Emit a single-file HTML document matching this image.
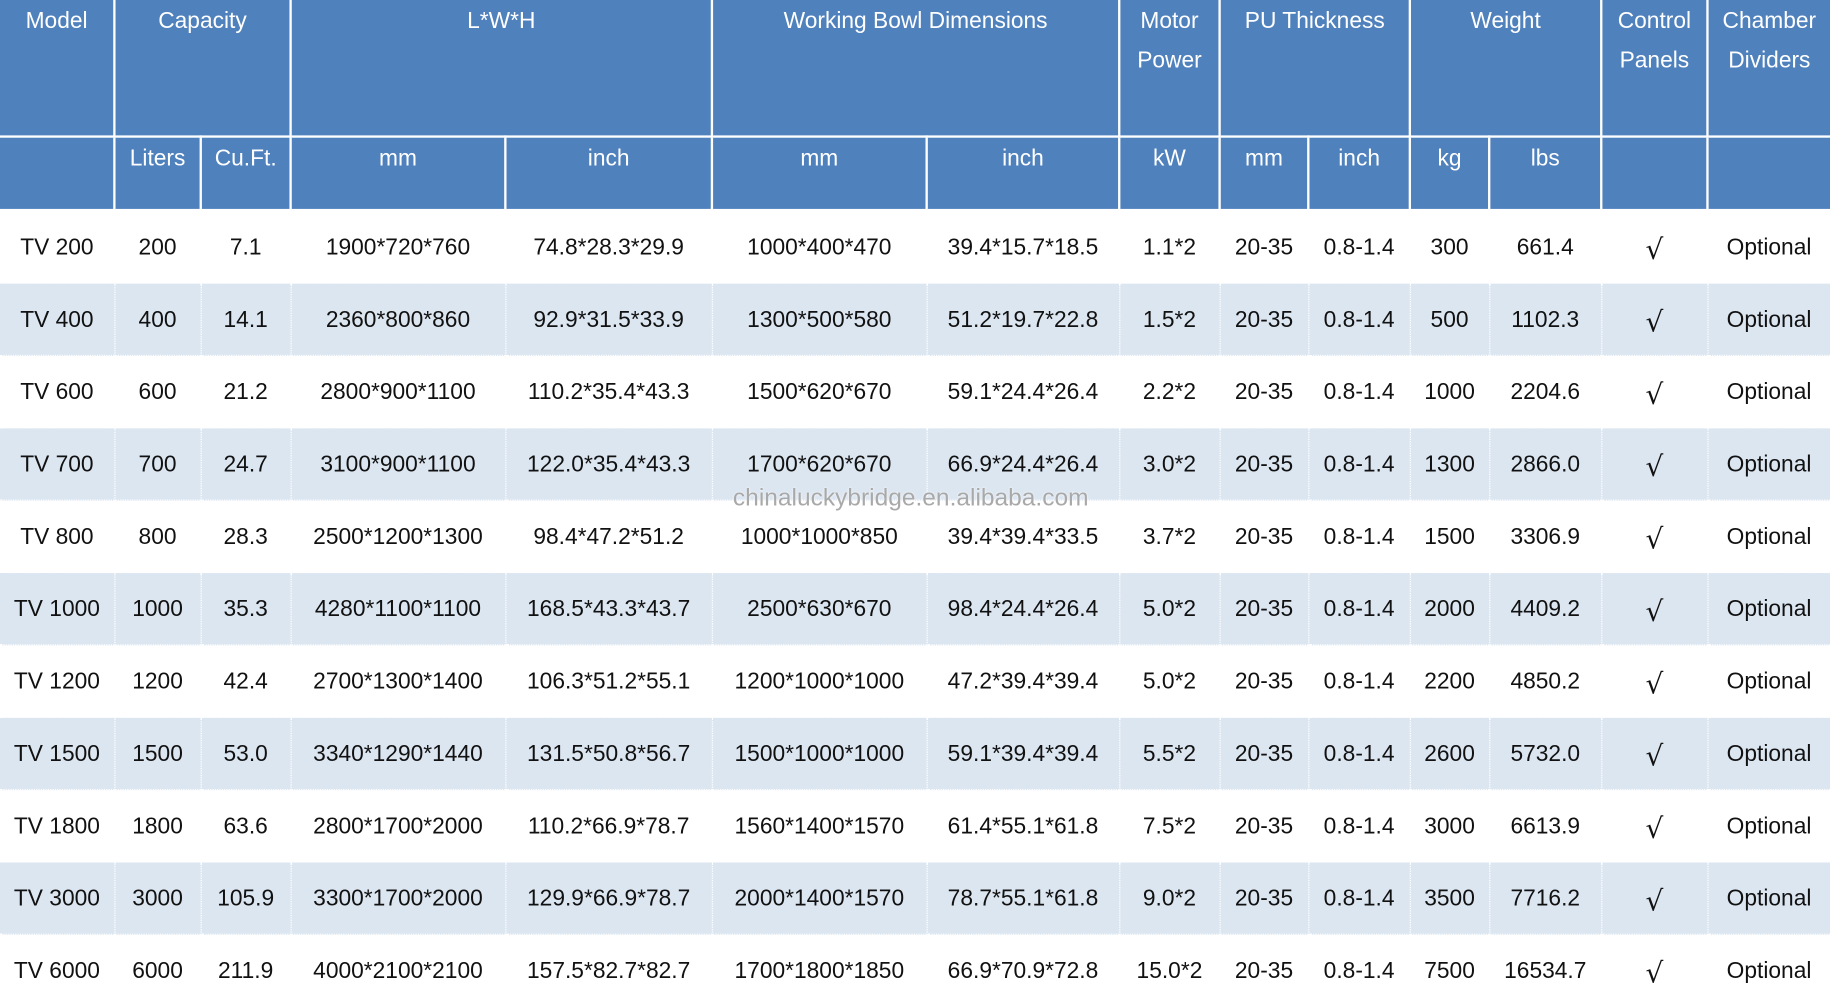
<!DOCTYPE html>
<html><head><meta charset="utf-8">
<style>
html,body{margin:0;padding:0;background:#fff;overflow:hidden;width:1830px;height:998px}
#w{position:absolute;left:0;top:0;width:1568px;height:855px;transform:scale(1.16709);transform-origin:0 0;overflow:hidden}
table{border-collapse:collapse;table-layout:fixed;width:1568px;font-family:"Liberation Sans",Arial,sans-serif;font-size:19.5px}
th{background:#4f81bd;color:#fff;font-weight:normal;vertical-align:top;line-height:34px;border:2px solid #fff;border-top:none;padding:1px 0 0 0}
tr.h1 th{height:115px}
tr.h2 th{height:60px}
th:first-child{border-left:none}
th:last-child{border-right:none}
td{text-align:center;color:#111;height:61px;line-height:24px;padding:0;border-right:1.5px dotted #fff;border-top:1.5px dotted #fff}
tr.s td{background:#dce6f1}
td:last-child{border-right:none}
.c span{font-size:24px;line-height:24px;font-family:"DejaVu Sans",sans-serif;position:relative;top:3px}
.wm{position:absolute;left:628px;top:415px;font-family:"Liberation Sans",Arial,sans-serif;font-size:21px;color:#a9a9a9;text-shadow:0 0 2px #fff}
</style></head><body><div id="w">
<table>
<colgroup><col style="width:98px"><col style="width:74px"><col style="width:77px"><col style="width:184px"><col style="width:177px"><col style="width:184px"><col style="width:165px"><col style="width:86px"><col style="width:76px"><col style="width:87px"><col style="width:68px"><col style="width:96px"><col style="width:91px"><col style="width:105px"></colgroup>
<tr class="h1"><th>Model</th><th colspan="2">Capacity</th><th colspan="2">L*W*H</th><th colspan="2">Working Bowl Dimensions</th><th>Motor<br>Power</th><th colspan="2">PU Thickness</th><th colspan="2">Weight</th><th>Control<br>Panels</th><th>Chamber<br>Dividers</th></tr>
<tr class="h2"><th></th><th>Liters</th><th>Cu.Ft.</th><th>mm</th><th>inch</th><th>mm</th><th>inch</th><th>kW</th><th>mm</th><th>inch</th><th>kg</th><th>lbs</th><th></th><th></th></tr>
<tr><td>TV 200</td><td>200</td><td>7.1</td><td>1900*720*760</td><td>74.8*28.3*29.9</td><td>1000*400*470</td><td>39.4*15.7*18.5</td><td>1.1*2</td><td>20-35</td><td>0.8-1.4</td><td>300</td><td>661.4</td><td class="c"><span>√</span></td><td>Optional</td></tr>
<tr class="s"><td>TV 400</td><td>400</td><td>14.1</td><td>2360*800*860</td><td>92.9*31.5*33.9</td><td>1300*500*580</td><td>51.2*19.7*22.8</td><td>1.5*2</td><td>20-35</td><td>0.8-1.4</td><td>500</td><td>1102.3</td><td class="c"><span>√</span></td><td>Optional</td></tr>
<tr><td>TV 600</td><td>600</td><td>21.2</td><td>2800*900*1100</td><td>110.2*35.4*43.3</td><td>1500*620*670</td><td>59.1*24.4*26.4</td><td>2.2*2</td><td>20-35</td><td>0.8-1.4</td><td>1000</td><td>2204.6</td><td class="c"><span>√</span></td><td>Optional</td></tr>
<tr class="s"><td>TV 700</td><td>700</td><td>24.7</td><td>3100*900*1100</td><td>122.0*35.4*43.3</td><td>1700*620*670</td><td>66.9*24.4*26.4</td><td>3.0*2</td><td>20-35</td><td>0.8-1.4</td><td>1300</td><td>2866.0</td><td class="c"><span>√</span></td><td>Optional</td></tr>
<tr><td>TV 800</td><td>800</td><td>28.3</td><td>2500*1200*1300</td><td>98.4*47.2*51.2</td><td>1000*1000*850</td><td>39.4*39.4*33.5</td><td>3.7*2</td><td>20-35</td><td>0.8-1.4</td><td>1500</td><td>3306.9</td><td class="c"><span>√</span></td><td>Optional</td></tr>
<tr class="s"><td>TV 1000</td><td>1000</td><td>35.3</td><td>4280*1100*1100</td><td>168.5*43.3*43.7</td><td>2500*630*670</td><td>98.4*24.4*26.4</td><td>5.0*2</td><td>20-35</td><td>0.8-1.4</td><td>2000</td><td>4409.2</td><td class="c"><span>√</span></td><td>Optional</td></tr>
<tr><td>TV 1200</td><td>1200</td><td>42.4</td><td>2700*1300*1400</td><td>106.3*51.2*55.1</td><td>1200*1000*1000</td><td>47.2*39.4*39.4</td><td>5.0*2</td><td>20-35</td><td>0.8-1.4</td><td>2200</td><td>4850.2</td><td class="c"><span>√</span></td><td>Optional</td></tr>
<tr class="s"><td>TV 1500</td><td>1500</td><td>53.0</td><td>3340*1290*1440</td><td>131.5*50.8*56.7</td><td>1500*1000*1000</td><td>59.1*39.4*39.4</td><td>5.5*2</td><td>20-35</td><td>0.8-1.4</td><td>2600</td><td>5732.0</td><td class="c"><span>√</span></td><td>Optional</td></tr>
<tr><td>TV 1800</td><td>1800</td><td>63.6</td><td>2800*1700*2000</td><td>110.2*66.9*78.7</td><td>1560*1400*1570</td><td>61.4*55.1*61.8</td><td>7.5*2</td><td>20-35</td><td>0.8-1.4</td><td>3000</td><td>6613.9</td><td class="c"><span>√</span></td><td>Optional</td></tr>
<tr class="s"><td>TV 3000</td><td>3000</td><td>105.9</td><td>3300*1700*2000</td><td>129.9*66.9*78.7</td><td>2000*1400*1570</td><td>78.7*55.1*61.8</td><td>9.0*2</td><td>20-35</td><td>0.8-1.4</td><td>3500</td><td>7716.2</td><td class="c"><span>√</span></td><td>Optional</td></tr>
<tr><td>TV 6000</td><td>6000</td><td>211.9</td><td>4000*2100*2100</td><td>157.5*82.7*82.7</td><td>1700*1800*1850</td><td>66.9*70.9*72.8</td><td>15.0*2</td><td>20-35</td><td>0.8-1.4</td><td>7500</td><td>16534.7</td><td class="c"><span>√</span></td><td>Optional</td></tr>
</table>
<div class="wm">chinaluckybridge.en.alibaba.com</div>
</div></body></html>
